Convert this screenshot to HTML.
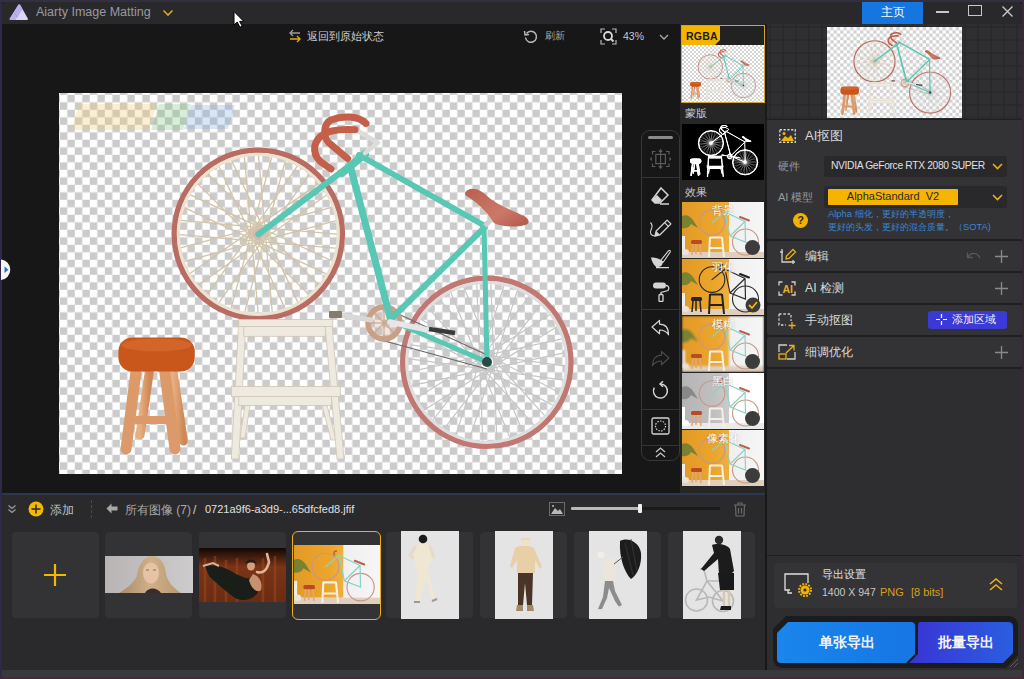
<!DOCTYPE html><html><head><meta charset="utf-8"><style>
*{margin:0;padding:0;box-sizing:border-box}
html,body{width:1024px;height:679px;overflow:hidden;background:#171717;font-family:"Liberation Sans",sans-serif}
.a{position:absolute}
.t{position:absolute;white-space:nowrap;line-height:1}
</style></head><body><svg width="0" height="0" style="position:absolute"><symbol id="bike" viewBox="0 0 563 381">
<defs>
<linearGradient id="sadg" x1="0" y1="0" x2="1" y2="1"><stop offset="0" stop-color="#b86050"/><stop offset="0.6" stop-color="#cc7868"/><stop offset="1" stop-color="#b05848"/></linearGradient>
<linearGradient id="legg" x1="0" x2="1"><stop offset="0" stop-color="#e8b080"/><stop offset="1" stop-color="#d08858"/></linearGradient>
</defs>
<g style="opacity:var(--wm,0.3)"><path d="M20 11h78l-8 26h-78z" fill="#f0c870"/><path d="M100 11h32l-8 26h-32z" fill="#80c880"/><path d="M132 12h44l-7 24h-44z" fill="#80b0e0"/></g>
<!-- wheel 1 -->
<path d="M199.9 134.3L280.3 141.3M198.7 148.3L279.1 155.4M202.3 135.0L275.4 169.0M196.3 147.6L269.4 181.8M204.2 136.3L261.3 193.4M194.3 146.2L251.4 203.3M205.6 138.3L239.8 211.4M193.0 144.3L227.0 217.4M206.3 140.7L213.4 221.1M192.3 141.9L199.3 222.3M206.1 143.1L185.2 221.1M192.5 139.5L171.6 217.4M205.0 145.3L158.8 211.4M193.6 137.3L147.2 203.3M203.3 147.0L137.3 193.4M195.3 135.6L129.2 181.8M201.1 148.1L123.2 169.0M197.5 134.5L119.5 155.4M198.7 148.3L118.3 141.3M199.9 134.3L119.5 127.2M196.3 147.6L123.2 113.6M202.3 135.0L129.2 100.8M194.4 146.3L137.3 89.2M204.3 136.4L147.2 79.3M193.0 144.3L158.8 71.2M205.6 138.3L171.6 65.2M192.3 141.9L185.2 61.5M206.3 140.7L199.3 60.3M192.5 139.5L213.4 61.5M206.1 143.1L227.0 65.2M193.6 137.3L239.8 71.2M205.0 145.3L251.4 79.3M195.3 135.6L261.3 89.2M203.3 147.0L269.4 100.8M197.5 134.5L275.4 113.6M201.1 148.1L279.1 127.2" stroke="#d2c4a8" stroke-width="1.3" fill="none" opacity="1"/>
<circle cx="199.3" cy="141.3" r="84" fill="none" stroke="#b86c62" stroke-width="5.6"/>
<circle cx="199.3" cy="141.3" r="80" fill="none" stroke="#ece2d0" stroke-width="3.2"/>
<circle cx="199.3" cy="141.3" r="6" fill="#d8b8a8"/>
<!-- wheel 2 -->
<path d="M428.8 262.4L508.7 273.3M426.8 276.2L506.8 287.3M431.1 263.1L502.4 300.8M424.5 275.5L495.8 313.3M433.0 264.6L487.2 324.4M422.6 274.0L476.7 333.9M434.3 266.7L464.7 341.4M421.3 271.9L451.7 346.7M434.8 269.0L437.9 349.7M420.8 269.6L423.8 350.2M434.5 271.4L409.8 348.3M421.1 267.1L396.3 343.9M433.3 273.6L383.8 337.3M422.3 265.0L372.7 328.7M431.5 275.2L363.2 318.2M424.1 263.4L355.7 306.2M429.3 276.1L350.4 293.2M426.3 262.5L347.4 279.4M426.8 276.2L346.9 265.3M428.8 262.4L348.8 251.3M424.5 275.5L353.2 237.8M431.1 263.1L359.8 225.3M422.6 274.0L368.4 214.2M433.0 264.6L378.9 204.7M421.3 271.9L390.9 197.2M434.3 266.7L403.9 191.9M420.8 269.6L417.7 188.9M434.8 269.0L431.8 188.4M421.1 267.2L445.8 190.3M434.5 271.5L459.3 194.7M422.3 265.0L471.8 201.3M433.3 273.6L482.9 209.9M424.1 263.4L492.4 220.4M431.5 275.2L499.9 232.4M426.3 262.5L505.2 245.4M429.3 276.1L508.2 259.2" stroke="#c6c6c6" stroke-width="1.2" fill="none" opacity="1"/>
<circle cx="427.8" cy="269.3" r="84" fill="none" stroke="#c27872" stroke-width="5.6"/>
<circle cx="427.8" cy="269.3" r="80" fill="none" stroke="#dedede" stroke-width="3.2"/>
<!-- chain -->
<path d="M322 213 L428 262 M322 247 L428 276" stroke="#6a6a6a" stroke-width="1.2" fill="none"/>
<!-- chainring -->
<circle cx="325" cy="230" r="16" fill="#d8b8a4" fill-opacity="0.35" stroke="#c8a088" stroke-width="5.5"/><path d="M325 214 V246 M309 230 H341 M314 219 L336 241 M336 219 L314 241" stroke="#c8a088" stroke-width="1.5" opacity="0.7"/>
<path d="M281 222 L312 227" stroke="#d8d8d8" stroke-width="5" stroke-linecap="round"/>
<rect x="270" y="218" width="13" height="7" rx="1" fill="#8a7a6a"/>
<!-- frame -->
<g stroke="#58c8b4" stroke-linecap="round" fill="none">
<path d="M300 62 L426 133" stroke-width="6"/>
<path d="M291 72 L331 224" stroke-width="7"/>
<path d="M426 134 L333 225" stroke-width="6"/>
<path d="M425 133 L428 269" stroke-width="5"/>
<path d="M333 228 L428 269" stroke-width="5"/>
<path d="M199.3 141.3 L293 71" stroke-width="6"/>
<path d="M306 61 L283 80" stroke-width="8"/>
</g>
<path d="M331 229 L369 237" stroke="#e6e6e6" stroke-width="5.5" stroke-linecap="round"/>
<path d="M370 236 L396 240" stroke="#3a3a3a" stroke-width="4.5"/>
<circle cx="428" cy="269" r="5" fill="#2a4a48"/>
<!-- stem -->
<path d="M306 60 L319 49.7 L297 37" stroke="#dcdcdc" stroke-width="4.5" fill="none" stroke-linecap="round" stroke-linejoin="round"/>
<!-- handlebars -->
<g stroke="#c4604a" stroke-width="7" fill="none" stroke-linecap="round">
<path d="M296 36.7 C284 36 270 36 262 43 C252 52 255 63 262 69 L272 76"/>
<path d="M307 30.5 C300 23 284 22 272 27 C264 31 264 44 270 50 L288.7 65.6"/>
</g>
<!-- seat post + saddle -->
<path d="M426 133 L434 124" stroke="#d0d0d0" stroke-width="5"/>
<path d="M409 97 C414 94 422 97 428 103 C438 112 455 118 465 123 C471 126 471 131 466 132 C455 135 440 133 435 130 C430 122 422 112 409 104 C405 102 405 99 409 97Z" fill="url(#sadg)"/>
<!-- orange stool -->
<g stroke="url(#legg)" stroke-linecap="round" fill="none">
<path d="M90.3 279 L81 342" stroke-width="9"/><path d="M114 279 L124.4 348" stroke-width="9"/>
<path d="M87 318 L116 318" stroke-width="7"/>
</g>
<g stroke="#dc9a6a" stroke-linecap="round" fill="none">
<path d="M77 279 L67 356" stroke-width="11"/><path d="M105.8 279 L116 356" stroke-width="11"/>
<path d="M78 327 L109 327" stroke-width="8"/>
</g>
<rect x="59.4" y="244.5" width="76.3" height="34" rx="14" fill="#c9561a"/>
<ellipse cx="97.5" cy="252" rx="35" ry="6.5" fill="#d4652a"/>
<!-- white step stool -->
<g fill="#eeeae0" stroke="#cfc6b4" stroke-width="0.8">
<path d="M186 312 L191 312 L186 345 L181 345Z"/>
<path d="M263 312 L268 312 L277 347 L272 347Z"/>
<path d="M179.8 227 L187 227 L179.8 366 L172.3 366Z"/>
<path d="M265.5 227 L272.5 227 L285 366 L278 366Z"/>
<rect x="184.8" y="233.3" width="81.5" height="10"/>
<rect x="179.8" y="226.5" width="94" height="7"/>
<rect x="179.8" y="303.5" width="92.7" height="9"/>
<rect x="172.3" y="293.5" width="109" height="10"/>
</g>
</symbol><symbol id="room" viewBox="0 0 82 56">
<defs>
<linearGradient id="og" x1="0" x2="1"><stop offset="0" stop-color="#e29a26"/><stop offset="0.7" stop-color="#eca52c"/><stop offset="1" stop-color="#eeb040"/></linearGradient>
<linearGradient id="wg" x1="0" x2="1"><stop offset="0" stop-color="#e6e6e6"/><stop offset="1" stop-color="#f6f6f6"/></linearGradient>
</defs>
<g style="filter:var(--bgf)">
<rect width="82" height="56" fill="url(#wg)"/>
<rect width="47" height="50" fill="url(#og)"/>
<rect y="50" width="82" height="6" fill="#e0cfbc"/>
<path d="M0 14 C4 12 8 14 11 18 L16 26 L9 22 C7 26 3 27 0 26Z" fill="#5e7a36" opacity="0.8"/>
<rect x="0" y="34" width="3" height="16" fill="#f0ece6"/><ellipse cx="3" cy="50" rx="4" ry="3" fill="#ece4dc"/>
</g>
<g style="filter:var(--fgf)">
<circle cx="30" cy="20.6" r="12.8" fill="none" stroke="var(--tire,#c8968a)" stroke-width="1.1"/>
<circle cx="63.5" cy="40" r="13" fill="none" stroke="var(--tire,#c8968a)" stroke-width="1.1"/>
<path d="M30 20.6 L43 10 M43 10 L63 19.5 M43 10 L48 34 M63 19.5 L48 34 M63 19.5 L63.5 40 L48 34" fill="none" stroke="var(--frame,#88d4c4)" stroke-width="1.2" stroke-linecap="round"/>
<path d="M58 15 L67 18.5" stroke="var(--saddle,#c06050)" stroke-width="2" stroke-linecap="round"/>
<path d="M41 6 C38 5 37 8 39 10" stroke="var(--saddle,#c06050)" stroke-width="1.5" fill="none"/>
<rect x="9" y="38" width="11" height="4" rx="1.5" fill="var(--stool,#b84a2a)"/>
<path d="M11 42 L10 53 M18 42 L19 53 M14 42 L14 52" stroke="var(--legs,#e0a878)" stroke-width="1.5"/>
<g stroke="var(--step,#f4f0e6)" stroke-width="2" fill="none"><path d="M28 35 L27 55 M40 35 L42 55 M28 35.5 H40 M27.5 46 H41"/></g>
</g>
</symbol>
</svg><div class="a" style="left:0;top:0;width:1024px;height:24px;background:#29292c"></div>
<svg class="a" style="left:9px;top:4px" width="20" height="17" viewBox="0 0 20 17"><path d="M9.6 0.6 C10.2 0.2 10.8 0.4 11.2 1 L18.8 14.6 C19.2 15.4 18.8 16 18 16 H1.6 C0.8 16 0.4 15.4 0.8 14.6 Z" fill="#ddd6fa"/><path d="M9.6 0.6 C10.2 0.2 10.8 0.4 11.2 1 L13.6 5.6 L6.4 16 H1.6 C0.8 16 0.4 15.4 0.8 14.6 Z" fill="#b8aef0"/><path d="M5 9 L9 13" stroke="#a89ee0" stroke-width="1"/></svg>
<div class="t" style="left:36px;top:6px;font-size:12.5px;color:#9a9a9e">Aiarty Image Matting</div>
<svg class="a" style="left:162px;top:9px" width="12" height="8"><path d="M1.5 1.5 L6 6 L10.5 1.5" stroke="#d9a520" stroke-width="1.6" fill="none"/></svg>
<div class="a" style="left:862px;top:0;width:61px;height:24px;background:#1676e0"></div>
<div class="t" style="left:881px;top:6px;font-size:12px;color:#fff">主页</div>
<div class="a" style="left:936px;top:11px;width:13px;height:1.5px;background:#c8c8c8"></div>
<div class="a" style="left:968px;top:5px;width:14px;height:11px;border:1.5px solid #c8c8c8"></div>
<svg class="a" style="left:1001px;top:5px" width="14" height="14"><path d="M1.5 1.5 L11.5 11.5 M11.5 1.5 L1.5 11.5" stroke="#c8c8c8" stroke-width="1.4"/></svg>
<svg class="a" style="left:288px;top:29px" width="14" height="14"><path d="M12 4 H2 M5 1 L2 4 L5 7" stroke="#9a9a9a" stroke-width="1.4" fill="none"/><path d="M2 10 H12 M9 7 L12 10 L9 13" stroke="#e0a818" stroke-width="1.4" fill="none"/></svg>
<div class="t" style="left:307px;top:31px;font-size:11.3px;color:#d0d0d0">返回到原始状态</div>
<svg class="a" style="left:523px;top:29px" width="15" height="15"><path d="M3.5 4.5 A5.5 5.5 0 1 1 2.5 8.5" stroke="#b8b8b8" stroke-width="1.5" fill="none"/><path d="M1.5 2 L2 6 L6 5.5" stroke="#b8b8b8" stroke-width="1.5" fill="none"/></svg>
<div class="t" style="left:545px;top:31px;font-size:10.4px;color:#a8a8a8">刷新</div>
<svg class="a" style="left:600px;top:28px" width="17" height="17"><path d="M1 5 V1 H5 M12 1 H16 V5 M16 12 V16 H12 M5 16 H1 V12" stroke="#b8b8b8" stroke-width="1.2" fill="none"/><circle cx="8" cy="8" r="4" stroke="#d8d8d8" stroke-width="1.8" fill="none"/><path d="M11 11 L13.5 13.5" stroke="#d8d8d8" stroke-width="1.8"/></svg>
<div class="t" style="left:623px;top:31px;font-size:10.5px;color:#c8c8c8">43%</div>
<svg class="a" style="left:659px;top:34px" width="10" height="7"><path d="M1 1 L5 5 L9 1" stroke="#a8a8a8" stroke-width="1.3" fill="none"/></svg>
<svg class="a" style="left:59px;top:93px" width="563" height="381" viewBox="0 0 563 381">
<defs><pattern id="chk" x="0.8" y="1.8" width="15" height="15" patternUnits="userSpaceOnUse"><rect width="15" height="15" fill="#fff"/><rect x="7.5" width="7.5" height="7.5" fill="#cbcbcb"/><rect y="7.5" width="7.5" height="7.5" fill="#cbcbcb"/></pattern></defs>
<rect width="563" height="381" fill="url(#chk)"/>
<use href="#bike" x="0" y="0" width="563" height="381"/>
</svg>
<div class="a" style="left:641px;top:130px;width:39px;height:331px;border:1px solid #38383a;border-radius:9px;background:#171717"></div>
<div class="a" style="left:648px;top:136px;width:25px;height:3px;border-radius:2px;background:#8a8a8a"></div>
<div class="a" style="left:642px;top:177px;width:37px;height:1px;background:#343436"></div>
<div class="a" style="left:642px;top:309px;width:37px;height:1px;background:#343436"></div>
<div class="a" style="left:642px;top:409px;width:37px;height:1px;background:#343436"></div>
<div class="a" style="left:642px;top:445px;width:37px;height:1px;background:#343436"></div>
<svg class="a" style="left:649px;top:147px" width="24" height="24" viewBox="0 0 24 24"><path d="M3.5 7.5 V4.5 H6.5 M17 4.5 H20 V7.5 M20 16.5 V19.5 H17 M6.5 19.5 H3.5 V16.5" fill="none" stroke="#5c5c5c" stroke-width="1.2"/><rect x="6.8" y="7.4" width="9.6" height="9.2" fill="none" stroke="#5c5c5c" stroke-width="1.2"/><path d="M11.6 4 V20" stroke="#5c5c5c" stroke-width="1.1"/><path d="M9.4 5 L11.6 1.8 L13.8 5Z M9.4 19 L11.6 22.2 L13.8 19Z M2.8 9.8 L0.8 12 L2.8 14.2Z M20.4 9.8 L22.4 12 L20.4 14.2Z" fill="#5c5c5c"/></svg>
<svg class="a" style="left:650px;top:186px" width="21" height="20" viewBox="0 0 21 20"><path d="M11 2 L18 9 L10 17 L5 17 L2 14 Z" fill="none" stroke="#d4d4d4" stroke-width="1.5"/><path d="M2 14 L7 9 L12 14 L9 17 L5 17 Z" fill="#d4d4d4"/><path d="M10 18 H19" stroke="#d4d4d4" stroke-width="1.5"/></svg>
<svg class="a" style="left:649px;top:217px" width="23" height="21" viewBox="0 0 23 21"><path d="M6 19 L7.2 14 L18.1 3.1 L21.9 6.9 L11 17.8 Z" fill="none" stroke="#d4d4d4" stroke-width="1.3" stroke-linejoin="round"/><path d="M6 19 L7.2 14 L11 17.8Z" fill="#d4d4d4"/><path d="M15.6 5.6 L19.4 9.4" stroke="#d4d4d4" stroke-width="1.2"/><path d="M6 19 C2 19 0.5 16 2 13 C3.5 10 3 7 1.5 5.5" fill="none" stroke="#d4d4d4" stroke-width="1.1"/></svg>
<svg class="a" style="left:650px;top:249px" width="21" height="21" viewBox="0 0 21 21"><path d="M18.6 1.6 C19.6 1 20.8 2 20.2 3 L13.2 13.2 L10.8 11.4 Z" fill="none" stroke="#d4d4d4" stroke-width="1.1" stroke-linejoin="round"/><path d="M1 8.5 C4 8.5 8 9 11 11 L13 13 C12.5 16 11 18 7 18.3 C4 17 2 13 1 8.5Z" fill="#d4d4d4"/><path d="M6 18.6 H19" stroke="#d4d4d4" stroke-width="1.3"/></svg>
<svg class="a" style="left:651px;top:280px" width="20" height="22" viewBox="0 0 20 22"><rect x="2" y="2.5" width="13" height="6" rx="3" fill="#d4d4d4"/><path d="M15 5.5 C18 5.5 18.5 9 17 10.5 L10 12.5 V14.5" fill="none" stroke="#d4d4d4" stroke-width="1.3"/><rect x="8" y="14.5" width="4" height="7" rx="1" fill="none" stroke="#d4d4d4" stroke-width="1.3"/></svg>
<svg class="a" style="left:650px;top:319px" width="20" height="18" viewBox="0 0 20 18"><path d="M2 8 L9.5 1.5 V5.2 C15 5.2 18.5 9 18.5 15.8 C16.5 12.5 14 11 9.5 11 V14.8 Z" fill="none" stroke="#d4d4d4" stroke-width="1.2" stroke-linejoin="round"/></svg>
<svg class="a" style="left:651px;top:350px" width="20" height="18" viewBox="0 0 20 18"><path d="M18 8 L10.5 1.5 V5.2 C5 5.2 1.5 9 1.5 15.8 C3.5 12.5 6 11 10.5 11 V14.8 Z" fill="none" stroke="#4a4a4a" stroke-width="1.2" stroke-linejoin="round"/></svg>
<svg class="a" style="left:651px;top:380px" width="19" height="20" viewBox="0 0 19 20"><path d="M9.5 4 A7 7 0 1 1 3.3 7.6" fill="none" stroke="#d4d4d4" stroke-width="1.5"/><path d="M12 1.2 L9 4 L12 6.8" fill="none" stroke="#d4d4d4" stroke-width="1.5"/></svg>
<svg class="a" style="left:651px;top:417px" width="19" height="18" viewBox="0 0 19 18"><rect x="1" y="1" width="17" height="16" rx="1.5" fill="none" stroke="#d4d4d4" stroke-width="1.3"/><circle cx="9.5" cy="9" r="5" fill="none" stroke="#d4d4d4" stroke-width="1.2" stroke-dasharray="1.5 1.3"/></svg>
<svg class="a" style="left:655px;top:447px" width="11" height="11" viewBox="0 0 11 11"><path d="M1 5 L5.5 1 L10 5 M1 10 L5.5 6 L10 10" fill="none" stroke="#c8c8c8" stroke-width="1.3"/></svg>
<div class="a" style="left:680px;top:24px;width:86px;height:470px;background:#262626"></div>
<div class="a" style="left:765px;top:24px;width:2px;height:470px;background:#1a1a1a"></div>
<div class="a" style="left:681px;top:25px;width:84px;height:78px;border:1px solid #d0a43a;background:#222"></div>
<svg class="a" style="left:682px;top:45px;--wm:0" width="82" height="57" viewBox="0 0 82 57"><defs><pattern id="chk2" width="4" height="4" patternUnits="userSpaceOnUse"><rect width="4" height="4" fill="#fff"/><rect x="2" width="2" height="2" fill="#d4d4d4"/><rect y="2" width="2" height="2" fill="#d4d4d4"/></pattern></defs><rect width="82" height="57" fill="url(#chk2)"/><use href="#bike" x="-0.6" y="1.5" width="81.6" height="55.2"/></svg>
<svg class="a" style="left:682px;top:26px" width="39" height="19"><path d="M0 0 H38 V14 L33 19 H0 Z" fill="#f5b400"/></svg>
<div class="t" style="left:686px;top:31px;font-size:10.5px;font-weight:bold;color:#1a1a1a;letter-spacing:0.2px">RGBA</div>
<div class="t" style="left:685px;top:108px;font-size:11.4px;color:#c8c8c8">蒙版</div>
<svg class="a" style="left:682px;top:124px;--wm:0" width="82" height="56" viewBox="0 0 82 56"><defs><filter id="wh"><feColorMatrix type="matrix" values="0 0 0 0 1  0 0 0 0 1  0 0 0 0 1  0 0 0 1.4 0"/></filter></defs><rect width="82" height="56" fill="#000"/><g filter="url(#wh)"><use href="#bike" x="-1" y="-2" width="84.5" height="57"/></g></svg>
<div class="t" style="left:685px;top:187px;font-size:11.4px;color:#c8c8c8">效果</div>
<svg class="a" style="left:682px;top:202px;" width="82" height="56" viewBox="0 0 82 56" preserveAspectRatio="none"><use href="#room" width="82" height="56"/></svg>
<div class="t" style="left:682px;top:205px;width:82px;text-align:center;font-size:11px;color:#fff;text-shadow:0 0 2px rgba(0,0,0,.3)">背景</div>
<div class="a" style="left:745px;top:240px;width:15px;height:15px;border-radius:50%;background:#3c3c3c"></div>
<svg class="a" style="left:682px;top:259px;--frame:#2a2a2a;--tire:#2a2a2a;--saddle:#222;--stool:#2a2520;--legs:#2a2520;--step:#222" width="82" height="56" viewBox="0 0 82 56" preserveAspectRatio="none"><use href="#room" width="82" height="56"/></svg>
<div class="t" style="left:682px;top:262px;width:82px;text-align:center;font-size:11px;color:#fff;text-shadow:0 0 2px rgba(0,0,0,.3)">羽化</div>
<svg class="a" style="left:745px;top:297px" width="16" height="16"><circle cx="8" cy="8" r="7.5" fill="#3a3a3a"/><path d="M4 8 L7 11 L12 5" stroke="#f5b400" stroke-width="1.8" fill="none"/></svg>
<svg class="a" style="left:682px;top:316px;--bgf:blur(1.2px)" width="82" height="56" viewBox="0 0 82 56" preserveAspectRatio="none"><use href="#room" width="82" height="56"/></svg>
<div class="t" style="left:682px;top:319px;width:82px;text-align:center;font-size:11px;color:#fff;text-shadow:0 0 2px rgba(0,0,0,.3)">模糊</div>
<div class="a" style="left:745px;top:354px;width:15px;height:15px;border-radius:50%;background:#3c3c3c"></div>
<svg class="a" style="left:682px;top:373px;--bgf:grayscale(1) brightness(1.12)" width="82" height="56" viewBox="0 0 82 56" preserveAspectRatio="none"><use href="#room" width="82" height="56"/></svg>
<div class="t" style="left:682px;top:376px;width:82px;text-align:center;font-size:11px;color:#fff;text-shadow:0 0 2px rgba(0,0,0,.3)">黑白</div>
<div class="a" style="left:745px;top:411px;width:15px;height:15px;border-radius:50%;background:#3c3c3c"></div>
<svg class="a" style="left:682px;top:430px;--bgf:blur(0.6px)" width="82" height="56" viewBox="0 0 82 56" preserveAspectRatio="none"><use href="#room" width="82" height="56"/></svg>
<div class="t" style="left:682px;top:433px;width:82px;text-align:center;font-size:11px;color:#fff;text-shadow:0 0 2px rgba(0,0,0,.3)">像素化</div>
<div class="a" style="left:745px;top:468px;width:15px;height:15px;border-radius:50%;background:#3c3c3c"></div>
<div class="a" style="left:767px;top:24px;width:256px;height:655px;background:#2e2e30"></div>
<svg class="a" style="left:767px;top:24px" width="256" height="96"><defs><pattern id="grd" x="-10.5" y="2.5" width="13" height="13" patternUnits="userSpaceOnUse"><rect width="13" height="13" fill="#2f2f31"/><path d="M0 0.5 H13 M0.5 0 V13" stroke="#252527" stroke-width="1"/></pattern></defs><rect width="256" height="96" fill="url(#grd)"/></svg>
<svg class="a" style="left:827px;top:27px;--wm:0" width="135" height="91" viewBox="0 0 135 91"><defs><pattern id="chk3" width="6.6" height="6.6" patternUnits="userSpaceOnUse"><rect width="6.6" height="6.6" fill="#fff"/><rect x="3.3" width="3.3" height="3.3" fill="#d2d2d2"/><rect y="3.3" width="3.3" height="3.3" fill="#d2d2d2"/></pattern></defs><rect width="135" height="91" fill="url(#chk3)"/><use href="#bike" x="-1" y="0" width="137" height="92.7"/></svg>
<div class="a" style="left:767px;top:119px;width:255px;height:1px;background:#1f1f21"></div>
<div class="a" style="left:767px;top:120px;width:255px;height:119px;background:#333335;border-radius:2px"></div>
<svg class="a" style="left:779px;top:129px" width="17" height="14" viewBox="0 0 17 14"><rect x="0.75" y="0.75" width="15.5" height="12.5" fill="none" stroke="#d8d8d8" stroke-width="1.3" stroke-dasharray="2.2 1.6"/><path d="M2 12 L6 7 L9 9 L12 6 L15 12 Z" fill="#f0b400"/><circle cx="5" cy="4.5" r="1.5" fill="#f0b400"/></svg>
<div class="t" style="left:805px;top:129px;font-size:13px;color:#d8d8d8">AI抠图</div>
<div class="t" style="left:778px;top:161px;font-size:11px;color:#9a9a9a">硬件</div>
<div class="a" style="left:824px;top:156px;width:183px;height:21px;background:#29292b;border-radius:3px"></div>
<div class="t" style="left:831px;top:161px;font-size:10.3px;color:#e0e0e0;letter-spacing:-0.35px">NVIDIA GeForce RTX 2080 SUPER</div>
<svg class="a" style="left:992px;top:163px" width="11" height="7"><path d="M1 1 L5.5 5.5 L10 1" stroke="#e8b020" stroke-width="1.6" fill="none"/></svg>
<div class="t" style="left:778px;top:192px;font-size:11px;color:#9a9a9a">AI 模型</div>
<div class="a" style="left:824px;top:186px;width:183px;height:22px;background:#29292b;border-radius:3px"></div>
<div class="a" style="left:828px;top:189px;width:130px;height:16px;background:#f5b400;border-radius:1px"></div>
<div class="t" style="left:828px;top:191px;width:130px;text-align:center;font-size:11px;color:#2a2a2a">AlphaStandard&nbsp; V2</div>
<svg class="a" style="left:992px;top:194px" width="11" height="7"><path d="M1 1 L5.5 5.5 L10 1" stroke="#e8b020" stroke-width="1.6" fill="none"/></svg>
<div class="a" style="left:793px;top:213px;width:15px;height:15px;border-radius:50%;background:#f0b400"></div>
<div class="t" style="left:793px;top:215px;width:15px;text-align:center;font-size:11px;font-weight:bold;color:#2a2a2a">?</div>
<div class="t" style="left:828px;top:209px;font-size:9.4px;color:#3a86d8">Alpha 细化，更好的半透明度，</div>
<div class="t" style="left:828px;top:222px;font-size:9.4px;color:#3a86d8">更好的头发，更好的混合质量。（SOTA)</div>
<div class="a" style="left:767px;top:239px;width:255px;height:130px;background:#1f1f21"></div>
<div class="a" style="left:767px;top:240.5px;width:255px;height:30.5px;background:#333335;border-radius:2px"></div>
<div class="t" style="left:805px;top:249.5px;font-size:12.4px;color:#d8d8d8">编辑</div>
<div class="a" style="left:767px;top:272.5px;width:255px;height:30.5px;background:#333335;border-radius:2px"></div>
<div class="t" style="left:805px;top:281.5px;font-size:12.4px;color:#d8d8d8">AI 检测</div>
<div class="a" style="left:767px;top:304.5px;width:255px;height:30.5px;background:#333335;border-radius:2px"></div>
<div class="t" style="left:805px;top:313.5px;font-size:12.4px;color:#d8d8d8">手动抠图</div>
<div class="a" style="left:767px;top:336.5px;width:255px;height:30.5px;background:#333335;border-radius:2px"></div>
<div class="t" style="left:805px;top:345.5px;font-size:12.4px;color:#d8d8d8">细调优化</div>
<svg class="a" style="left:779px;top:248px" width="18" height="17" viewBox="0 0 18 17"><path d="M3 1 V14 H16 M1 4 H4 M14 12 V16" stroke="#d0d0d0" stroke-width="1.3" fill="none"/><path d="M14 1.5 L16.5 4 L10 10.5 L7 11 L7.5 8 Z" stroke="#e8b020" stroke-width="1.3" fill="none"/></svg>
<svg class="a" style="left:778px;top:281px" width="18" height="15" viewBox="0 0 18 15"><path d="M1 4.5 V1 H4.5 M13.5 1 H17 V4.5 M17 10.5 V14 H13.5 M4.5 14 H1 V10.5" stroke="#d0d0d0" stroke-width="1.3" fill="none"/></svg>
<div class="t" style="left:782.5px;top:283.5px;font-size:10.5px;font-weight:bold;color:#e8b020">AI</div>
<svg class="a" style="left:778px;top:313px" width="19" height="17" viewBox="0 0 19 17"><path d="M1 1 H13 V8 M1 1 V12 H8" stroke="#d0d0d0" stroke-width="1.3" fill="none" stroke-dasharray="2.5 1.8"/><path d="M14 9 V16 M10.5 12.5 H17.5" stroke="#e8b020" stroke-width="1.3"/></svg>
<svg class="a" style="left:778px;top:344px" width="18" height="16" viewBox="0 0 18 16"><path d="M1 8 V1 H9 M17 8 V15 H9" stroke="#d0d0d0" stroke-width="1.3" fill="none"/><path d="M8 9 L16 1.5 M11 1.5 H16 V6.5" stroke="#e8b020" stroke-width="1.3" fill="none"/><rect x="1" y="10" width="7" height="5" stroke="#e8b020" stroke-width="1.3" fill="none"/></svg>
<svg class="a" style="left:966px;top:251px" width="16" height="11"><path d="M2 6 C5 1 11 1 14 7 M1.5 1.5 V6.5 H6.5" stroke="#5a5a5a" stroke-width="1.3" fill="none"/></svg>
<svg class="a" style="left:995px;top:250px" width="13" height="13"><path d="M6.5 0 V13 M0 6.5 H13" stroke="#8a8a8a" stroke-width="1.3"/></svg>
<svg class="a" style="left:995px;top:282px" width="13" height="13"><path d="M6.5 0 V13 M0 6.5 H13" stroke="#8a8a8a" stroke-width="1.3"/></svg>
<svg class="a" style="left:995px;top:346px" width="13" height="13"><path d="M6.5 0 V13 M0 6.5 H13" stroke="#8a8a8a" stroke-width="1.3"/></svg>
<div class="a" style="left:928px;top:311px;width:79px;height:18px;background:#3b3ad6;border-radius:3px"></div>
<svg class="a" style="left:936px;top:314px" width="11" height="11"><path d="M5.5 0 V4 M5.5 7 V11 M0 5.5 H4 M7 5.5 H11" stroke="#fff" stroke-width="1.2"/></svg>
<div class="t" style="left:952px;top:314px;font-size:11.4px;color:#f0f0f0">添加区域</div>
<div class="a" style="left:767px;top:555px;width:255px;height:1px;background:#1e1e20"></div>
<div class="a" style="left:774px;top:563px;width:243px;height:45px;background:#343436;border-radius:4px"></div>
<svg class="a" style="left:784px;top:573px" width="28" height="24" viewBox="0 0 28 24"><path d="M6 17 H1 V1 H24 V10" stroke="#e0e0e0" stroke-width="1.3" fill="none"/><path d="M4 17 V20 H8" stroke="#e0e0e0" stroke-width="1.3" fill="none"/><circle cx="21" cy="17" r="4.5" fill="#f0b400"/><circle cx="21" cy="17" r="6" fill="none" stroke="#f0b400" stroke-width="2" stroke-dasharray="1.8 1.3"/><circle cx="21" cy="17" r="1.6" fill="#343436"/></svg>
<div class="t" style="left:822px;top:569px;font-size:11.4px;color:#e0e0e0">导出设置</div>
<div class="t" style="left:822px;top:587px;font-size:10.5px;color:#c8c8c8">1400 X 947</div>
<div class="t" style="left:880px;top:587px;font-size:11px;color:#d8a020">PNG</div>
<div class="t" style="left:911px;top:587px;font-size:11px;color:#d8a020">[8 bits]</div>
<svg class="a" style="left:989px;top:578px" width="14" height="13"><path d="M1 6 L7 1 L13 6 M1 12 L7 7 L13 12" stroke="#e8b020" stroke-width="1.6" fill="none"/></svg>
<svg class="a" style="left:772px;top:615px" width="248" height="55" viewBox="0 0 248 55"><path d="M14 1 H236 Q246 1 246 11 V40 L234 53 H12 Q1 53 1 42 V14 Z" fill="#1c1c1e"/><defs><linearGradient id="b1" x1="0" x2="1"><stop offset="0" stop-color="#1a86ec"/><stop offset="1" stop-color="#1676e4"/></linearGradient><linearGradient id="b2" x1="0" x2="1"><stop offset="0" stop-color="#3a34d4"/><stop offset="1" stop-color="#2a5ee0"/></linearGradient></defs><path d="M16 7 H139 Q143 7 143 11 V39 L134 48 H9 Q5 48 5 44 V18 Z" fill="url(#b1)"/><path d="M149 7 H236 Q241 7 241 12 V38 L231 48 H137 L146 39 V10 Q146 7 149 7Z" fill="url(#b2)"/><path d="M238 52 L246 44 M242 52 L246 48" stroke="#5a5a5a" stroke-width="1"/></svg>
<div class="t" style="left:819px;top:635px;font-size:14px;font-weight:bold;color:#f4f4f4">单张导出</div>
<div class="t" style="left:938px;top:635px;font-size:14px;font-weight:bold;color:#f4f4f4">批量导出</div>
<div class="a" style="left:0;top:493px;width:765px;height:1.5px;background:#2c3850"></div>
<div class="a" style="left:0;top:494.5px;width:765px;height:176px;background:#2a2a2c"></div>
<svg class="a" style="left:7px;top:504px" width="10" height="11"><path d="M1.5 1.5 L5 4.5 L8.5 1.5 M1.5 5.5 L5 8.5 L8.5 5.5" stroke="#9a9a9a" stroke-width="1.3" fill="none"/></svg>
<svg class="a" style="left:28px;top:501px" width="16" height="16"><circle cx="8" cy="8" r="7.5" fill="#f5b800"/><path d="M8 3.5 V12.5 M3.5 8 H12.5" stroke="#2a2a2a" stroke-width="1.5"/></svg>
<div class="t" style="left:50px;top:504px;font-size:12px;color:#c0c0c0">添加</div>
<div class="a" style="left:91px;top:500px;width:1px;height:18px;border-left:1px dashed #4a4a4a"></div>
<svg class="a" style="left:106px;top:503px" width="12" height="11"><path d="M5.5 0.5 L0.5 5.5 L5.5 10.5 V7.5 H11.5 V3.5 H5.5Z" fill="#a8a8a8"/></svg>
<div class="t" style="left:125px;top:504px;font-size:12px;color:#a8a8a8">所有图像 (7)</div>
<div class="t" style="left:193px;top:504px;font-size:12px;color:#d0d0d0">/</div>
<div class="t" style="left:205px;top:504px;font-size:11px;color:#e0e0e0">0721a9f6-a3d9-...65dfcfed8.jfif</div>
<svg class="a" style="left:549px;top:502px" width="16" height="14"><rect x="0.5" y="0.5" width="15" height="13" fill="none" stroke="#6a6a6a"/><path d="M2 12 L6 6 L9 9 L11 7 L14 12Z" fill="#b8b8b8"/><circle cx="4" cy="4" r="1" fill="#b8b8b8"/></svg>
<div class="a" style="left:571px;top:507px;width:149px;height:3px;background:#1a1a1a;border-radius:1px"></div>
<div class="a" style="left:571px;top:507px;width:69px;height:3px;background:#b8b8b8;border-radius:1px"></div>
<div class="a" style="left:638px;top:504px;width:4px;height:9px;background:#f0f0f0;border-radius:1px"></div>
<svg class="a" style="left:733px;top:502px" width="14" height="15"><path d="M1 3 H13 M5 3 V1 H9 V3 M2.5 3 L3 14 H11 L11.5 3 M5.5 6 V11.5 M8.5 6 V11.5" stroke="#6a6a6a" stroke-width="1.2" fill="none"/></svg>
<div class="a" style="left:12px;top:532px;width:87px;height:86px;background:#333335;border-radius:4px"></div>
<div class="a" style="left:105px;top:532px;width:87px;height:86px;background:#333335;border-radius:4px"></div>
<div class="a" style="left:199px;top:532px;width:87px;height:86px;background:#333335;border-radius:4px"></div>
<div class="a" style="left:292px;top:532px;width:87px;height:86px;background:#333335;border-radius:4px"></div>
<div class="a" style="left:386px;top:532px;width:87px;height:86px;background:#333335;border-radius:4px"></div>
<div class="a" style="left:480px;top:532px;width:87px;height:86px;background:#333335;border-radius:4px"></div>
<div class="a" style="left:574px;top:532px;width:87px;height:86px;background:#333335;border-radius:4px"></div>
<div class="a" style="left:668px;top:532px;width:87px;height:86px;background:#333335;border-radius:4px"></div>
<svg class="a" style="left:43px;top:563px" width="24" height="24"><path d="M12 1 V23 M1 12 H23" stroke="#f5b800" stroke-width="2.2"/></svg>
<svg class="a" style="left:105px;top:556px" width="88" height="37" viewBox="0 0 88 37"><defs><linearGradient id="wbg" x1="0" x2="1"><stop offset="0" stop-color="#b8b4b4"/><stop offset="1" stop-color="#cdcbcc"/></linearGradient><linearGradient id="hair" x1="0" x2="1"><stop offset="0" stop-color="#a88a68"/><stop offset="0.5" stop-color="#d0b088"/><stop offset="1" stop-color="#b89870"/></linearGradient></defs><rect width="88" height="37" fill="url(#wbg)"/><path d="M14 37 C22 32 28 28 32 20 C33 10 38 1 46 0 C56 0 60 8 61 18 C63 27 70 33 76 37Z" fill="url(#hair)"/><ellipse cx="46" cy="17" rx="8" ry="10.5" fill="#e6c2a6"/><path d="M40 37 C43 31 52 31 56 37Z" fill="#3a2c26"/><path d="M41 14 H44 M48 14 H51" stroke="#8a6a58" stroke-width="1"/></svg>
<svg class="a" style="left:199px;top:548px" width="87" height="54" viewBox="0 0 87 54"><defs><linearGradient id="dbg" x1="0" x2="0" y1="0" y2="1"><stop offset="0" stop-color="#100806"/><stop offset="0.35" stop-color="#7a3416"/><stop offset="1" stop-color="#6a2c12"/></linearGradient></defs><rect width="87" height="54" fill="url(#dbg)"/><g stroke="#a04a20" stroke-width="2.5" opacity="0.5"><path d="M6 10 V54 M16 8 V54 M27 12 V54 M38 10 V54 M64 10 V54 M76 8 V54"/></g><path d="M6 18 C14 16 22 18 30 22 C40 28 48 32 56 30 C60 34 62 40 58 46 C52 52 44 54 36 50 C28 44 18 36 10 28 Z" fill="#1a1e18"/><path d="M4 18 L14 15 L20 18" stroke="#d8b098" stroke-width="2" fill="none"/><ellipse cx="52" cy="18" rx="4" ry="4.5" fill="#d0a080"/><path d="M46 16 C48 10 56 10 58 16 C56 14 50 14 46 16Z" fill="#2a1a14"/><path d="M58 24 C64 26 68 22 70 14 L68 6" stroke="#e0b498" stroke-width="2.6" fill="none" stroke-linecap="round"/><path d="M54 26 C60 28 64 34 62 42 C58 46 52 40 50 32Z" fill="#c89070"/></svg>
<div class="a" style="left:292px;top:530.5px;width:89px;height:89px;border:1.8px solid #e8b020;border-radius:6px;background:#333335"></div>
<svg class="a" style="left:294px;top:545px" width="86" height="59" viewBox="0 0 82 56" preserveAspectRatio="none"><use href="#room" width="82" height="56"/></svg>
<svg class="a" style="left:401px;top:531px" width="58" height="88" viewBox="0 0 58 88"><rect width="58" height="88" fill="#e4e4e4"/><path d="M16 14 C18 12 26 12 29 15 L31 30 L28 31 L27 40 L34 66 L35 69 L31 70 L25 48 L19 70 L15 71 L16 44 L14 31 L12 29 Z" fill="#efe7d2"/><path d="M14 16 L9 24 L12 27 M29 16 L33 26" stroke="#e6dcc4" stroke-width="3" fill="none" stroke-linecap="round"/><circle cx="22" cy="8" r="4.3" fill="#1a1a1a"/><path d="M13 71 H19 M31 70 L36 68" stroke="#9a9a9a" stroke-width="2.2"/></svg>
<svg class="a" style="left:495px;top:531px" width="58" height="88" viewBox="0 0 58 88"><rect width="58" height="88" fill="#e4e4e4"/><path d="M20 17 C24 14 35 14 39 17 L47 36 L45 38 L40 29 L40 42 H22 L22 29 L17 37 L15 35Z" fill="#e9cfa8"/><path d="M23 42 L23 74 H28 L30 52 L32 74 H37 L38 42Z" fill="#4a3427"/><path d="M22 74 H28 V80 H21Z M32 74 H38 L39 80 H32Z" fill="#a08868"/><circle cx="30.5" cy="10" r="4" fill="#efe2c4"/><path d="M26 8 H35" stroke="#e8d8b8" stroke-width="2"/></svg>
<svg class="a" style="left:589px;top:531px" width="58" height="88" viewBox="0 0 58 88"><rect width="58" height="88" fill="#e4e4e4"/><path d="M31 10 C38 6 50 10 52 22 C53 34 48 44 42 48 C36 42 30 28 31 10Z" fill="#1c1c1c"/><path d="M36 12 L44 44 M42 8 L48 40" stroke="#3a3a3a" stroke-width="0.8"/><path d="M15 28 C19 26 25 27 27 31 L28 44 L24 50 H16 L14 42 Z" fill="#ece6da"/><path d="M16 50 L14 66 L9 78 H13 L18 67 L20 57 L26 70 L30 76 L33 74 L26 60 L24 50Z" fill="#8c8c8c"/><circle cx="12" cy="24" r="3.6" fill="#f2eee6"/><path d="M8 79 H14 M29 77 L34 75" stroke="#e0e0e0" stroke-width="2"/><path d="M25 33 L34 26" stroke="#555" stroke-width="1"/></svg>
<svg class="a" style="left:683px;top:531px" width="58" height="88" viewBox="0 0 58 88"><rect width="58" height="88" fill="#e4e4e4"/><g stroke="#b8b8b8" stroke-width="1.6" fill="none"><circle cx="13.5" cy="69" r="11"/><circle cx="40" cy="70" r="10.5"/><path d="M13.5 69 L24 50 L40 70 L26 66 Z M24 50 L21 39 M17 38 H24 M24 50 H36"/></g><path d="M29 14 C34 12 44 13 47 18 L51 40 L47 44 H36 L35 28 L21 40 L18 38 L31 22Z" fill="#1c1c1c"/><path d="M35 42 H51 V59 H37Z" fill="#1a1a1a"/><path d="M41 59 V75 M46 59 V75" stroke="#d8c8b0" stroke-width="2.5"/><path d="M38 75 H48 V79 H37Z" fill="#1a1a1a"/><circle cx="36" cy="9" r="4.2" fill="#2a2a2a"/></svg>
<div class="a" style="left:0;top:670px;width:1024px;height:7px;background:#39393b"></div>
<svg class="a" style="left:0;top:0" width="8" height="8"><path d="M0 0 H8 V1.2 C4 1.2 1.2 4 1.2 8 H0Z" fill="#1c1a34"/></svg>
<svg class="a" style="left:1016px;top:0" width="8" height="8"><path d="M8 0 H0 V1.2 C4 1.2 6.8 4 6.8 8 H8Z" fill="#24142a"/></svg>
<div class="a" style="left:0;top:0;width:1.5px;height:679px;background:#302848"></div>
<svg class="a" style="left:0;top:259px" width="12" height="22"><path d="M1 0.5 A10.3 10.3 0 0 1 1 21 Z" fill="#f4f4f4"/><path d="M4.5 7.5 L8.5 10.8 L4.5 14 Z" fill="#2a72c8"/></svg>
<div class="a" style="left:1022px;top:0;width:2px;height:679px;background:#3a2838"></div>
<div class="a" style="left:0;top:677px;width:1024px;height:2px;background:#4a2838"></div>
<div class="a" style="left:0;top:0;width:1024px;height:1.5px;background:#332e40"></div>
<svg class="a" style="left:230px;top:8px" width="18" height="22" viewBox="230 8 18 22"><path d="M234 11.5 L234 25 L237.2 22 L240 27.2 L242.2 26.2 L239.6 21.4 L243.8 21.4 Z" fill="#fff" stroke="#000" stroke-width="1" stroke-linejoin="round"/></svg></body></html>
